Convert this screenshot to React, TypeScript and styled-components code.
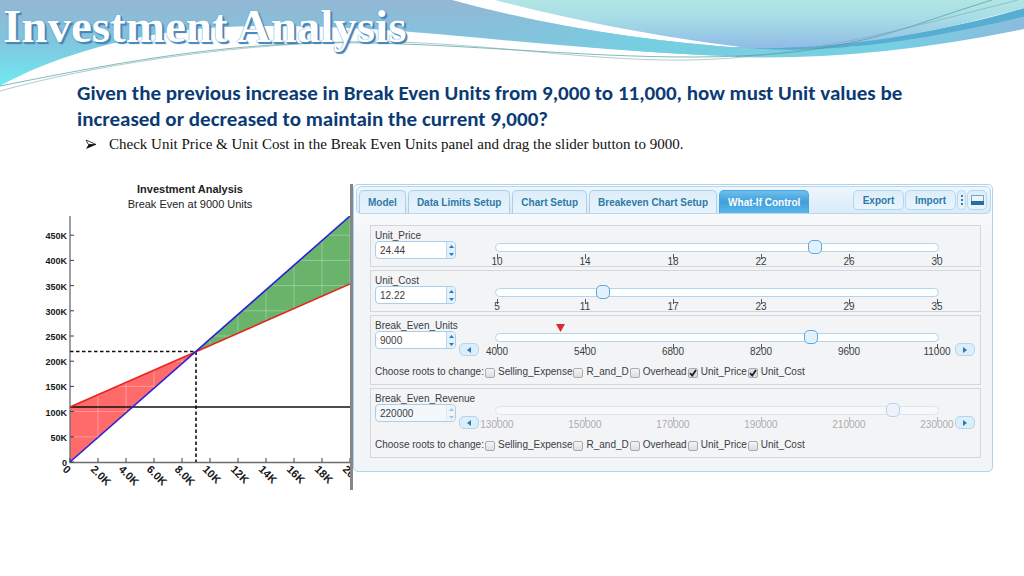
import React, { useState } from "react";
import styled, { createGlobalStyle, css } from "styled-components";

const GlobalStyle = createGlobalStyle`
  *, *::before, *::after { box-sizing: border-box; }
  body {
    margin: 0;
    background: #ffffff;
    color: #3a3d42;
    font-family: "Liberation Sans", Arial, sans-serif;
    font-size: 10px;
  }
  button, input { font: inherit; color: inherit; margin: 0; }
`;

/* ---------- banner ---------- */

const Banner = styled.header`
  position: relative;
  height: 80px;
`;

const Waves = styled.svg`
  position: absolute;
  inset: 0 0 auto 0;
  width: 100%;
  height: 94px;
  z-index: -1;
`;

const Title = styled.h1`
  margin: 0;
  padding-left: 3px;
  color: #ffffff;
  font: bold 47px/52px "Liberation Serif", "Times New Roman", serif;
  white-space: nowrap;
  text-shadow: 0 0 1px #3b7fb5, 1px 1px 0 #4a8fc4, 2px 2px 1px #3b7fb5;
`;

/* ---------- question text ---------- */

const Question = styled.h2`
  margin: 0 77px;
  color: #0b3b75;
  font: bold 21px/26px Carlito, Lato, sans-serif;
`;

const Steps = styled.ul`
  margin: 0 77px;
  padding: 0;
  list-style: none;
  color: #111111;
  font: 15px/24px "Liberation Serif", "Times New Roman", serif;
`;

const Step = styled.li`
  display: flex;
  align-items: center;
  gap: 12px;
  padding-left: 8px;
`;

/* ---------- workspace ---------- */

const Workspace = styled.main`
  display: grid;
  grid-template-columns: 313fr 640fr;
  align-items: start;
  margin: 28px 31px 0 40px;
`;

const Figure = styled.figure`
  margin: 0;
  border-right: 3px solid #85878a;
`;

const Caption = styled.figcaption`
  height: 32px;
  margin-right: 10px;
  text-align: center;
  font-size: 11px;
  line-height: 16px;
  color: #222222;
`;

const CaptionTitle = styled.strong`
  display: block;
  line-height: 10px;
  padding-bottom: 2px;
`;

const Plot = styled.svg`
  display: block;
  width: 100%;
  height: auto;
`;

const AxisText = styled.text<{ $size?: number }>`
  font: bold ${(p) => p.$size ?? 9}px "Liberation Sans", Arial, sans-serif;
  fill: #16181a;
`;

const Panel = styled.section`
  border: 1px solid #a9d5ee;
  border-radius: 5px;
  background: linear-gradient(#fcfdfe, #f2f5f8 60px, #f2f5f8);
  padding: 1px 1px 13px 2px;
`;

const PanelBar = styled.div`
  display: flex;
  align-items: flex-end;
  justify-content: space-between;
  height: 28px;
  padding: 0 3px 0 2px;
  border: 1px solid #b5d8ee;
  border-radius: 5px;
  background: linear-gradient(#eef6fc, #d9ebf8);
`;

const Tabs = styled.nav`
  display: flex;
  gap: 2px;
`;

const Tab = styled.button<{ $active?: boolean }>`
  height: 23px;
  padding: 0 8px;
  border: 1px solid #aed0e5;
  border-bottom: 0;
  border-radius: 5px 5px 0 0;
  background: linear-gradient(#dceefa, #e8f4fc);
  color: #2f79a8;
  font-weight: bold;
  white-space: nowrap;
  ${(p) =>
    p.$active &&
    css`
      border-color: #4aa5dc;
      background: linear-gradient(#6fbfeb, #3f9fdc 50%, #5cb6ea);
      color: #ffffff;
    `}
`;

const Actions = styled.div`
  display: flex;
  gap: 1px;
  padding-bottom: 3px;
`;

const Action = styled.button<{ $width: number }>`
  display: flex;
  align-items: center;
  justify-content: center;
  width: ${(p) => p.$width}px;
  height: 20px;
  padding: 0;
  border: 1px solid #b5d8ee;
  border-radius: 5px;
  background: linear-gradient(#dceefa, #eaf5fc);
  color: #2f79a8;
  font-weight: bold;
`;

const Rows = styled.div`
  display: grid;
  gap: 3px;
  padding: 11px 10px 0 14px;
`;

const Row = styled.section`
  padding: 0 5px 0 4px;
  border: 1px solid #d3d6da;
  background: #f3f4f6;
`;

const Controls = styled.div`
  display: grid;
  grid-template-columns: 84px 20px 1fr 20px;
  height: 40px;
`;

const Field = styled.label`
  display: block;
  padding-top: 4px;
  line-height: 11px;
  white-space: nowrap;
`;

const Spinner = styled.span<{ $disabled?: boolean }>`
  display: flex;
  width: 81px;
  height: 18px;
  border: 1px solid #a9d0ea;
  border-radius: 4px;
  background: ${(p) => (p.$disabled ? "#f5f8fa" : "#ffffff")};
  overflow: hidden;
`;

const SpinnerInput = styled.input`
  flex: 1;
  min-width: 0;
  padding: 0 4px;
  border: 0;
  background: transparent;
`;

const SpinnerButtons = styled.span<{ $disabled?: boolean }>`
  display: grid;
  width: 9px;
  border-left: 1px solid #b5d8ee;
  background: #e3f1fb;
  opacity: ${(p) => (p.$disabled ? 0.4 : 1)};
`;

const SpinnerButton = styled.button`
  display: grid;
  place-items: center;
  padding: 0;
  border: 0;
  background: none;
  color: #2a7ab5;
`;

const Nudge = styled.button`
  align-self: end;
  display: grid;
  place-items: center;
  height: 13px;
  margin-bottom: 1px;
  padding: 0;
  border: 1px solid #b0d6f0;
  border-radius: 5px;
  background: #dceefa;
  color: #2a7ab5;
`;

const Slider = styled.div<{ $disabled?: boolean }>`
  position: relative;
  grid-column: 3;
  display: grid;
  grid-template-rows: 14px 1fr;
  margin: 14px 11px 0;
  opacity: ${(p) => (p.$disabled ? 0.4 : 1)};
`;

const Track = styled.div`
  grid-area: 1 / 1;
  align-self: center;
  height: 9px;
  margin: 0 5px;
  border: 1px solid #b5d5ec;
  border-radius: 5px;
  background: #fdfefe;
`;

const Range = styled.input`
  grid-area: 1 / 1;
  z-index: 1;
  appearance: none;
  width: 100%;
  height: 14px;
  background: transparent;
  &::-webkit-slider-thumb {
    appearance: none;
    width: 14px;
    height: 14px;
    border: 1px solid #5aa9e0;
    border-radius: 5px;
    background: #e2f1fc;
  }
`;

const Scale = styled.div`
  display: flex;
  justify-content: space-between;
  padding: 0 7px;
`;

const Mark = styled.span`
  display: flex;
  flex-direction: column;
  align-items: center;
  width: 0;
  line-height: 10px;
  &::before {
    content: "";
    flex: none;
    width: 1px;
    height: 5px;
    margin-bottom: -2px;
    background: #55585c;
  }
`;

const Origin = styled.svg`
  position: absolute;
  top: -6px;
  left: 15%;
  margin-left: -2px;
`;

const Roots = styled.fieldset`
  display: flex;
  align-items: center;
  gap: 1px;
  height: 28px;
  margin: 0;
  padding: 2px 0 0;
  border: 0;
  white-space: nowrap;
`;

const Root = styled.label`
  display: flex;
  align-items: center;
  gap: 3px;
`;

const Tick = styled.input`
  appearance: none;
  display: grid;
  place-items: center;
  width: 10px;
  height: 10px;
  margin-top: 4px;
  border: 1px solid #a8abaf;
  border-radius: 2px;
  background: linear-gradient(#f4f4f4, #dcdddf);
  &:checked {
    background: #dcdddf
      url("data:image/svg+xml,%3Csvg xmlns='http://www.w3.org/2000/svg' viewBox='0 0 8 8'%3E%3Cpath d='M1 4.2 3.2 6.5 7 1' fill='none' stroke='%23222' stroke-width='1.8'/%3E%3C/svg%3E");
  }
`;

type Variable = {
  name: string;
  value: number;
  marks: number[];
  roots?: string[];
  origin?: boolean;
  disabled?: boolean;
};

const rootNames = ["Selling_Expense", "R_and_D", "Overhead", "Unit_Price", "Unit_Cost"];

const variables: Variable[] = [
  { name: "Unit_Price", value: 24.44, marks: [10, 14, 18, 22, 26, 30] },
  { name: "Unit_Cost", value: 12.22, marks: [5, 11, 17, 23, 29, 35] },
  {
    name: "Break_Even_Units",
    value: 9000,
    marks: [4000, 5400, 6800, 8200, 9600, 11000],
    roots: ["Unit_Price", "Unit_Cost"],
    origin: true,
  },
  {
    name: "Break_Even_Revenue",
    value: 220000,
    marks: [130000, 150000, 170000, 190000, 210000, 230000],
    roots: [],
    disabled: true,
  },
];

function Arrow({ d, w = 5, h = 3 }: { d: string; w?: number; h?: number }) {
  return (
    <svg width={w} height={h} aria-hidden="true">
      <path d={d} fill="currentColor" />
    </svg>
  );
}

function VariableRow({ item }: { item: Variable }) {
  const [value, setValue] = useState(item.value);
  const [roots, setRoots] = useState(item.roots ?? []);
  const min = item.marks[0];
  const max = item.marks[item.marks.length - 1];
  const step = max - min > 100 ? 100 : 0.01;
  const nudge = (by: number) => setValue((v) => Math.min(max, Math.max(min, +(v + by).toFixed(2))));
  const toggle = (root: string) =>
    setRoots((list) => (list.includes(root) ? list.filter((r) => r !== root) : [...list, root]));

  return (
    <Row>
      <Controls>
        <Field>
          {item.name}
          <Spinner $disabled={item.disabled}>
            <SpinnerInput value={value} onChange={(e) => setValue(Number(e.target.value) || 0)} />
            <SpinnerButtons $disabled={item.disabled}>
              <SpinnerButton type="button" aria-label="Increase" onClick={() => nudge(step)}>
                <Arrow d="M0 3h5L2.500 0z" />
              </SpinnerButton>
              <SpinnerButton type="button" aria-label="Decrease" onClick={() => nudge(-step)}>
                <Arrow d="M0 0h5L2.500 3z" />
              </SpinnerButton>
            </SpinnerButtons>
          </Spinner>
        </Field>
        {item.roots && (
          <Nudge type="button" aria-label="Step down" onClick={() => nudge(-step)}>
            <Arrow w={4} h={6} d="M4 0v6L0 3z" />
          </Nudge>
        )}
        <Slider $disabled={item.disabled}>
          <Track />
          <Range
            type="range"
            aria-label={item.name}
            min={min}
            max={max}
            step={step}
            value={value}
            onChange={(e) => setValue(Number(e.target.value))}
          />
          {item.origin && (
            <Origin width="9" height="8" aria-hidden="true">
              <path d="M0 0h9L4.500 8z" fill="#d92b2b" />
            </Origin>
          )}
          <Scale>
            {item.marks.map((mark) => (
              <Mark key={mark}>{mark}</Mark>
            ))}
          </Scale>
        </Slider>
        {item.roots && (
          <Nudge type="button" aria-label="Step up" onClick={() => nudge(step)}>
            <Arrow w={4} h={6} d="M0 0v6L4 3z" />
          </Nudge>
        )}
      </Controls>
      {item.roots && (
        <Roots>
          <span>Choose roots to change:</span>
          {rootNames.map((root) => (
            <Root key={root}>
              <Tick type="checkbox" checked={roots.includes(root)} onChange={() => toggle(root)} />
              {root}
            </Root>
          ))}
        </Roots>
      )}
    </Row>
  );
}

function BreakevenChart() {
  const yTicks = [0, 50, 100, 150, 200, 250, 300, 350, 400, 450];
  const xTicks = ["0", "2.0K", "4.0K", "6.0K", "8.0K", "10K", "12K", "14K", "16K", "18K", "20K"];
  const yOf = (k: number) => 246 - (k / 50) * 25.2;
  const xOf = (i: number) => 30 + i * 28;
  return (
    <Plot viewBox="0 0 310 274" role="img" aria-label="Break even chart">
      <defs>
        <clipPath id="regions">
          <path d="M30 191 156 135.500 30 246zM156 135.500 310 0V68z" />
        </clipPath>
      </defs>
      <path d="M30 191 156 135.500 30 246z" fill="#ff6b6b" />
      <path d="M156 135.500 310 0V68z" fill="#69b36b" />
      <g clipPath="url(#regions)" stroke="#ffffff" strokeOpacity="0.3">
        {yTicks.map((k) => (
          <path key={k} d={`M30 ${yOf(k)}H310`} />
        ))}
        {xTicks.map((t, i) => (
          <path key={t} d={`M${xOf(i)} 0V246`} />
        ))}
      </g>
      <path d="M30 0V246.500H310" fill="none" stroke="#6a6c6e" strokeWidth="1.3" />
      {yTicks.map((k) => (
        <g key={k}>
          <path d={`M30 ${yOf(k)}h4`} stroke="#3c3e40" />
          <AxisText x="27" y={yOf(k) + 4} textAnchor="end">
            {k === 0 ? "0" : `${k}K`}
          </AxisText>
        </g>
      ))}
      {xTicks.map((t, i) => (
        <g key={t}>
          <path d={`M${xOf(i)} 246v-4`} stroke="#3c3e40" />
          <AxisText $size={11} transform={`translate(${xOf(i) - 8} 254) rotate(45)`}>
            {t}
          </AxisText>
        </g>
      ))}
      <path d="M30 191H310" stroke="#111111" strokeWidth="1.6" />
      <path d="M30 135.500H156V246" fill="none" stroke="#111111" strokeWidth="1.6" strokeDasharray="3.500 2.500" />
      <path d="M30 191 310 68" stroke="#e3261f" strokeWidth="1.6" />
      <path d="M30 246 310 0" stroke="#2b20d8" strokeWidth="1.6" />
    </Plot>
  );
}

export default function App() {
  const [active, setActive] = useState("What-If Control");
  const tabs = ["Model", "Data Limits Setup", "Chart Setup", "Breakeven Chart Setup", "What-If Control"];
  return (
    <>
      <GlobalStyle />
      <Banner>
        <Waves viewBox="0 0 1024 94" preserveAspectRatio="none" aria-hidden="true">
          <defs>
            <linearGradient id="left" x1="0" y1="0" x2="0" y2="1">
              <stop offset="0" stopColor="#93b7d4" />
              <stop offset="0.450" stopColor="#83c3dc" />
              <stop offset="1" stopColor="#6deaf3" />
            </linearGradient>
            <linearGradient id="top" x1="0" y1="0" x2="0" y2="1">
              <stop offset="0" stopColor="#b2e6e4" />
              <stop offset="0.400" stopColor="#a6dce6" />
              <stop offset="1" stopColor="#8fbbe6" />
            </linearGradient>
            <linearGradient id="tail" x1="0" y1="0" x2="1" y2="0">
              <stop offset="0" stopColor="#7ccfe0" />
              <stop offset="0.500" stopColor="#74d0e2" />
              <stop offset="1" stopColor="#8cbcdd" />
            </linearGradient>
            <linearGradient id="mid" x1="0" y1="0" x2="1" y2="0">
              <stop offset="0" stopColor="#8abcd8" stopOpacity="0" />
              <stop offset="0.600" stopColor="#76cfe1" />
            </linearGradient>
          </defs>
          <path
            d="M0 0H452Q590 38 755 49V57C620 53 480 37 400 31C330 26 250 23 185 30C120 38 50 58 0 86z"
            fill="url(#left)"
          />
          <path d="M452 0Q590 38 755 49V57C640 54 540 42 452 35z" fill="url(#mid)" />
          <path d="M735 47H850L1024 17V29Q870 61 735 57z" fill="url(#tail)" />
          <path d="M750 48C850 56 950 33 1024 17V8C950 30 850 48 750 48z" fill="#58add2" />
          <path d="M495 0C590 25 680 40 750 48C860 50 950 28 1024 8V0z" fill="url(#top)" />
          <path
            d="M0 86C130 60 240 40 370 43S620 61 740 56S910 25 992 0"
            fill="none"
            stroke="#4d9c9c"
            strokeWidth="0.700"
          />
          <path
            d="M0 91C90 66 220 46 340 42S580 62 690 60S900 30 1018 0"
            fill="none"
            stroke="#7fa9ac"
            strokeWidth="0.600"
          />
        </Waves>
        <Title>Investment Analysis</Title>
      </Banner>
      <Question>
        Given the previous increase in Break Even Units from 9,000 to 11,000, how must Unit values be increased or
        decreased to maintain the current 9,000?
      </Question>
      <Steps>
        <Step>
          <svg width="12" height="11" viewBox="0 0 12 11" aria-hidden="true">
            <path d="M1 1 11 5.500H3.500z" fill="none" stroke="#111111" strokeWidth="0.800" />
            <path d="M1 10 3.500 5.500H11.500z" fill="#111111" />
          </svg>
          Check Unit Price &amp; Unit Cost in the Break Even Units panel and drag the slider button to 9000.
        </Step>
      </Steps>
      <Workspace>
        <Figure>
          <Caption>
            <CaptionTitle>Investment Analysis</CaptionTitle>
            Break Even at 9000 Units
          </Caption>
          <BreakevenChart />
        </Figure>
        <Panel>
          <PanelBar>
            <Tabs>
              {tabs.map((tab) => (
                <Tab key={tab} type="button" $active={tab === active} onClick={() => setActive(tab)}>
                  {tab}
                </Tab>
              ))}
            </Tabs>
            <Actions>
              <Action type="button" $width={51}>
                Export
              </Action>
              <Action type="button" $width={51}>
                Import
              </Action>
              <Action type="button" $width={9} aria-label="More">
                <svg width="2" height="10" aria-hidden="true">
                  <path d="M0 0h2v2H0zM0 4h2v2H0zM0 8h2v2H0z" fill="#3f7ea6" />
                </svg>
              </Action>
              <Action type="button" $width={20} aria-label="Dock">
                <svg width="13" height="10" aria-hidden="true">
                  <path d="M.5.5h12v9H.5z" fill="#e9f4fb" stroke="#6aa6cc" />
                  <path d="M0 6h13v4H0z" fill="#246f9f" />
                </svg>
              </Action>
            </Actions>
          </PanelBar>
          <Rows>
            {variables.map((item) => (
              <VariableRow key={item.name} item={item} />
            ))}
          </Rows>
        </Panel>
      </Workspace>
    </>
  );
}
